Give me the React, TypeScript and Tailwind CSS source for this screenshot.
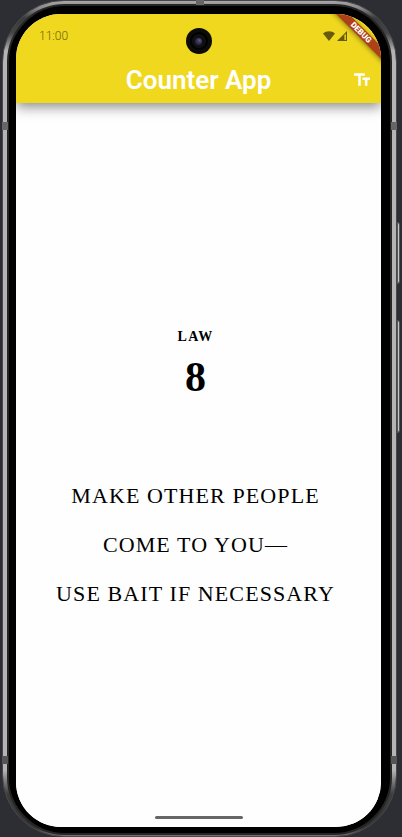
import React from "react";
import { MdTextFields } from "react-icons/md";

function StatusBar() {
  return (
    <div className="flex h-[43px] items-center justify-between pl-[23px] pr-[34px] text-[#6d620f]">
      <time className="text-xs font-light">11:00</time>
      <div className="flex items-center gap-[2px]">
        <svg width="12" height="10" viewBox="0 0 12 10" aria-label="Wi-Fi">
          <path d="M0 2.6C3.4-.6 8.6-.6 12 2.6L6 10Z" fill="#665b0c" />
        </svg>
        <svg width="10" height="10" viewBox="0 0 10 10" aria-label="Signal">
          <path d="M0 10 10 0V10Z" fill="#665b0c" />
          <path d="M7.3 4.2 9 2.5V9H7.3Z" fill="#d8c11c" />
        </svg>
      </div>
    </div>
  );
}

function Camera() {
  return (
    <div className="absolute left-1/2 top-[14px] flex size-[26px] -translate-x-1/2 items-center justify-center rounded-full bg-[#0c0c0a]">
      <div className="flex size-[18px] items-center justify-center rounded-full border-2 border-black bg-[#101012]">
        <div className="size-[7px] rounded-full bg-[radial-gradient(circle_at_65%_35%,#6d4f80,#29304f_50%,#14202a)]" />
      </div>
    </div>
  );
}

function DebugBanner() {
  return (
    <div className="absolute -right-5 top-[14px] h-[9px] w-20 rotate-45 bg-[#ae4118] text-center text-[8px] font-black leading-[9px] text-white shadow-[0_1px_5px_rgba(0,0,0,0.45)]">
      DEBUG
    </div>
  );
}

function AppBar() {
  return (
    <header className="relative z-10 bg-[#f0d81e] shadow-[0_4px_12px_rgba(0,0,0,0.45)]">
      <StatusBar />
      <div className="grid h-[46px] grid-cols-[1fr_auto_1fr] items-center px-[9px]">
        <h1 className="col-start-2 text-[26px] font-semibold leading-8 text-white">Counter App</h1>
        <button type="button" aria-label="Text size" className="justify-self-end text-white">
          <MdTextFields size={20} />
        </button>
      </div>
    </header>
  );
}

function Law() {
  return (
    <main className="flex flex-1 flex-col items-center justify-center bg-[#fefefe] pr-[6px] pt-[14px] text-center font-['Liberation_Serif',serif] text-black">
      <p className="text-sm font-bold leading-5 tracking-widest">LAW</p>
      <p className="mt-[10px] text-[42px] font-bold leading-10">8</p>
      <h2 className="mt-[74px] text-[22px] leading-[49px] tracking-wider">
        MAKE OTHER PEOPLE
        <br />
        COME TO YOU—
        <br />
        USE BAIT IF NECESSARY
      </h2>
    </main>
  );
}

export default function App() {
  return (
    <div className="flex min-h-screen overflow-hidden bg-[#2d2e33] pl-[2px] pr-[5px] font-[Roboto,sans-serif]">
      <div className="relative flex flex-1 rounded-[62px] border border-[#48484a] bg-[linear-gradient(to_bottom,#a9a5a8_0px,#8b898b_7px,#3a3a3b_17px,#444_32px,#b5b3b3_50px,#b5b3b3_calc(100%-66px),#3c3c3d_calc(100%-42px),#333_calc(100%-8px),#777_100%)] px-1 pb-px pt-[3px]">
        <span className="absolute -left-px top-[121px] h-2 w-[6px] bg-[#666]" />
        <span className="absolute -right-px top-[121px] h-2 w-[6px] bg-[#666]" />
        <span className="absolute -left-px bottom-[72px] h-2 w-[6px] bg-[#555]" />
        <span className="absolute -right-px bottom-[72px] h-2 w-[6px] bg-[#555]" />
        <span className="absolute -top-px left-1/2 h-[5px] w-2 -translate-x-1/2 bg-[#666]" />
        <span className="absolute -right-[4px] top-[221px] h-[62px] w-[3px] rounded-r-sm border border-[#55565a] bg-[#c4c6c6]" />
        <span className="absolute -right-[4px] top-[319px] h-[113px] w-[3px] rounded-r-sm border border-[#55565a] bg-[#c4c6c6]" />
        <div className="flex flex-1 rounded-[58px] border-2 border-[#252526] bg-black pb-[6px] pl-[7px] pr-[9px] pt-[8px]">
          <div className="relative flex flex-1 flex-col overflow-hidden rounded-[45px] bg-white">
            <AppBar />
            <Law />
            <div className="absolute bottom-2 left-1/2 h-[3px] w-[88px] -translate-x-1/2 rounded-full bg-[#666]" />
            <div className="absolute inset-x-0 top-0 z-20">
              <Camera />
              <DebugBanner />
            </div>
          </div>
        </div>
      </div>
    </div>
  );
}
